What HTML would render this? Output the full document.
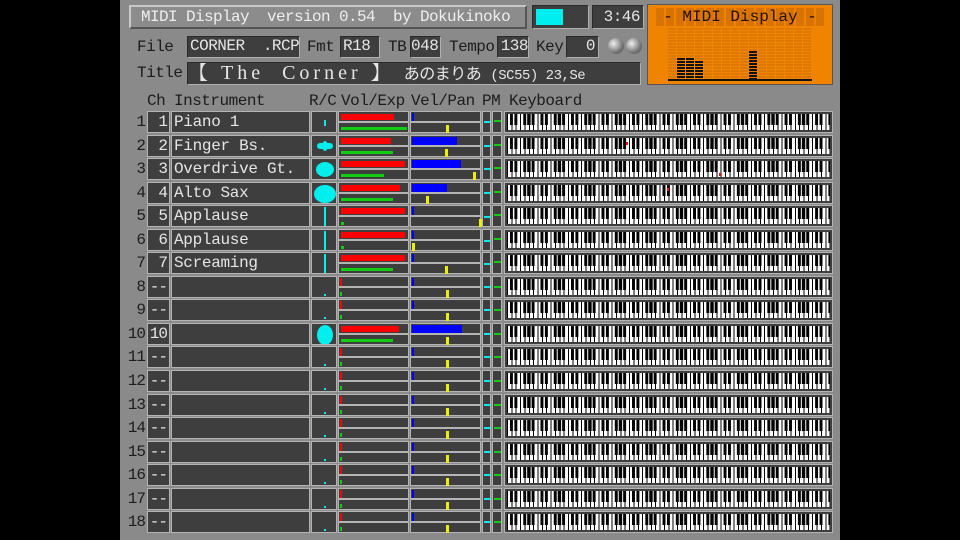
<!DOCTYPE html>
<html><head><meta charset="utf-8"><style>
*{margin:0;padding:0;box-sizing:border-box}
body{width:960px;height:540px;background:#000;position:relative;overflow:hidden;font-family:"Liberation Mono","Noto Sans CJK JP",monospace}
#p{position:absolute;left:120px;top:0;width:720px;height:540px;background:#8a8a8a}
.a{position:absolute}
.lbl{position:absolute;color:#1c1c1c;font-size:16px;line-height:20px;letter-spacing:-0.5px}
.box{position:absolute;background:#3e3e3e;border:1px solid #2a2a2a;border-right-color:#b0b0b0;border-bottom-color:#b0b0b0;color:#e6e6e6;font-size:16px;line-height:19px;overflow:hidden;white-space:nowrap;letter-spacing:-0.5px}
.row{position:absolute;left:0;width:720px;height:23px}
.row div{position:absolute}
.n{left:0;width:25px;text-align:right;color:#1c1c1c;font-size:16px;line-height:23px;letter-spacing:-1px}
.c{top:0;height:22px;background:#3e3e3e;border:1px solid #b4b4b4;color:#e6e6e6;font-size:16px;line-height:21px;white-space:nowrap;overflow:hidden}
.cb{left:27px;width:23px;text-align:right;padding-right:2px;letter-spacing:-1px}
.ib{left:51px;width:139px;padding-left:2px;letter-spacing:-0.3px}
.rc{left:191px;width:26px}
.h1{height:11px;background:#3e3e3e;border:1px solid #b4b4b4}
.v{left:218px;width:71px}
.w{left:290px;width:71px}
.t{top:0}.b{top:11px}
.pp{left:362px;width:9px}.mm{left:372px;width:10px}
.kb{left:384px;width:329px;padding:2px}
.kb i{display:block;width:100%;height:100%;background:
linear-gradient(90deg,transparent 0 2.9px,#000 2.9px 5.9px,transparent 5.9px 7.3px,#000 7.3px 10.3px,transparent 10.3px 16px,#000 16px 19px,transparent 19px 20.4px,#000 20.4px 23.4px,transparent 23.4px 24.7px,#000 24.7px 27.7px,transparent 27.7px) 0 0/30.52px 66% repeat-x,
repeating-linear-gradient(90deg,#000 0 1px,#fff 1px 4.36px)}
.r{background:#f00}.g{background:#1c1}.bl{background:#00f}.y{background:#ee0}.cy{background:#0ee}
</style></head><body><div id="p">
<div class="a" style="left:9px;top:5px;width:398px;height:24px;background:#8c8c8c;border:2px solid #c8c8c8;border-right-color:#555;border-bottom-color:#555;color:#eee;font-size:16px;line-height:20px;padding-left:10px;white-space:pre;letter-spacing:-0.6px">MIDI Display  version 0.54  by Dokukinoko</div>
<div class="box" style="left:412px;top:5px;width:57px;height:24px"><div class="a cy" style="left:3px;top:3px;width:27px;height:16px"></div></div>
<div class="box" style="left:472px;top:5px;width:52px;height:24px;text-align:right;padding-right:3px;line-height:22px">3:46</div>
<div class="a" style="left:527px;top:4px;width:186px;height:81px;background:#f08400;border:1px solid #555"></div>
<div class="a" style="left:536px;top:8px;width:168px;height:18px;background:repeating-linear-gradient(90deg,#d87200 0 8px,transparent 8px 10px)"></div>
<div class="a" style="left:535px;top:7px;width:170px;color:#201000;font-size:16px;line-height:20px;text-align:center;white-space:pre">- MIDI Display -</div>
<div class="a" style="left:548px;top:28px;width:144px;height:53px;background:repeating-linear-gradient(180deg,#dd7800 0 2px,transparent 2px 3px);-webkit-mask:repeating-linear-gradient(90deg,#000 0 8px,transparent 8px 9px);mask:repeating-linear-gradient(90deg,#000 0 8px,transparent 8px 9px)"></div>
<div class="a" style="left:548px;top:79px;width:144px;height:2px;background:#111"></div>
<div class="a" style="left:557px;top:58px;width:8px;height:23px;background:repeating-linear-gradient(180deg,#111 0 2px,transparent 2px 3px)"></div>
<div class="a" style="left:566px;top:58px;width:8px;height:23px;background:repeating-linear-gradient(180deg,#111 0 2px,transparent 2px 3px)"></div>
<div class="a" style="left:575px;top:61px;width:8px;height:20px;background:repeating-linear-gradient(180deg,#111 0 2px,transparent 2px 3px)"></div>
<div class="a" style="left:629px;top:51px;width:8px;height:30px;background:repeating-linear-gradient(180deg,#111 0 2px,transparent 2px 3px)"></div>
<div class="lbl" style="left:17px;top:37px">File</div>
<div class="box" style="left:67px;top:36px;width:113px;height:22px;white-space:pre;padding-left:2px">CORNER  .RCP</div>
<div class="lbl" style="left:187px;top:37px">Fmt</div>
<div class="box" style="left:220px;top:36px;width:40px;height:22px;padding-left:2px">R18</div>
<div class="lbl" style="left:268px;top:37px">TB</div>
<div class="box" style="left:290px;top:36px;width:31px;height:22px">048</div>
<div class="lbl" style="left:329px;top:37px">Tempo</div>
<div class="box" style="left:377px;top:36px;width:32px;height:22px;text-align:right">138</div>
<div class="lbl" style="left:416px;top:37px">Key</div>
<div class="box" style="left:446px;top:36px;width:33px;height:22px;text-align:right;padding-right:3px">0</div>
<div class="a" style="left:488px;top:38px;width:16px;height:16px;border-radius:50%;background:radial-gradient(circle at 35% 35%,#eee,#777 60%,#444)"></div>
<div class="a" style="left:506px;top:38px;width:16px;height:16px;border-radius:50%;background:radial-gradient(circle at 35% 35%,#eee,#777 60%,#444)"></div>
<div class="lbl" style="left:17px;top:63px">Title</div>
<div class="box" style="left:67px;top:62px;width:454px;height:23px;white-space:pre;line-height:21px"><span style="font-family:'Liberation Serif','Noto Serif CJK SC',serif;font-size:20px;letter-spacing:4px">【 The  Corner 】</span><span style="font-size:16px"> あのまりあ <span style="font-size:14px">(SC55) 23,Se</span></span></div>
<div class="lbl" style="left:27px;top:91px">Ch</div>
<div class="lbl" style="left:54px;top:91px">Instrument</div>
<div class="lbl" style="left:189px;top:91px">R/C</div>
<div class="lbl" style="left:221px;top:91px">Vol/Exp</div>
<div class="lbl" style="left:291px;top:91px">Vel/Pan</div>
<div class="lbl" style="left:362px;top:91px">PM</div>
<div class="lbl" style="left:389px;top:91px">Keyboard</div>

<div class="row" style="top:111px"><div class="n">1</div><div class="c cb">1</div><div class="c ib">Piano 1</div><div class="c rc"><div class="cy" style="left:12px;top:8px;width:2px;height:6px"></div></div><div class="h1 v t"><div class="r" style="left:2px;top:2px;width:53px;height:6px"></div></div><div class="h1 v b"><div class="g" style="left:2px;top:4px;width:66px;height:3px"></div></div><div class="h1 w t"><div class="bl" style="left:1px;top:1px;width:2px;height:8px"></div></div><div class="h1 w b"><div class="y" style="left:35px;top:2px;width:3px;height:8px"></div></div><div class="c pp"><div class="cy" style="left:1px;top:9px;width:6px;height:2px"></div></div><div class="c mm"><div class="g" style="left:1px;top:8px;width:7px;height:2px"></div></div><div class="c kb"><i></i></div></div>

<div class="row" style="top:135px"><div class="n">2</div><div class="c cb">2</div><div class="c ib">Finger Bs.</div><div class="c rc"><div class="cy" style="left:5px;top:7px;width:16px;height:6px;border-radius:3px"></div><div class="cy" style="left:10px;top:5px;width:6px;height:10px;border-radius:50%"></div></div><div class="h1 v t"><div class="r" style="left:2px;top:2px;width:50px;height:6px"></div></div><div class="h1 v b"><div class="g" style="left:2px;top:4px;width:52px;height:3px"></div></div><div class="h1 w t"><div class="bl" style="left:1px;top:1px;width:45px;height:8px"></div></div><div class="h1 w b"><div class="y" style="left:34px;top:2px;width:3px;height:8px"></div></div><div class="c pp"><div class="cy" style="left:1px;top:9px;width:6px;height:2px"></div></div><div class="c mm"><div class="g" style="left:1px;top:8px;width:7px;height:2px"></div></div><div class="c kb"><i></i><div class="r" style="left:121px;top:6px;width:2px;height:3px"></div></div></div>

<div class="row" style="top:158px"><div class="n">3</div><div class="c cb">3</div><div class="c ib">Overdrive Gt.</div><div class="c rc"><div class="cy" style="left:4px;top:3px;width:18px;height:15px;border-radius:50%"></div></div><div class="h1 v t"><div class="r" style="left:2px;top:2px;width:64px;height:6px"></div></div><div class="h1 v b"><div class="g" style="left:2px;top:4px;width:43px;height:3px"></div></div><div class="h1 w t"><div class="bl" style="left:1px;top:1px;width:49px;height:8px"></div></div><div class="h1 w b"><div class="y" style="left:62px;top:2px;width:3px;height:8px"></div></div><div class="c pp"><div class="cy" style="left:1px;top:9px;width:6px;height:2px"></div></div><div class="c mm"><div class="g" style="left:1px;top:8px;width:7px;height:2px"></div></div><div class="c kb"><i></i><div class="r" style="left:214px;top:14px;width:2px;height:3px"></div></div></div>

<div class="row" style="top:182px"><div class="n">4</div><div class="c cb">4</div><div class="c ib">Alto Sax</div><div class="c rc"><div class="cy" style="left:2px;top:2px;width:22px;height:18px;border-radius:50%"></div></div><div class="h1 v t"><div class="r" style="left:2px;top:2px;width:59px;height:6px"></div></div><div class="h1 v b"><div class="g" style="left:2px;top:4px;width:52px;height:3px"></div></div><div class="h1 w t"><div class="bl" style="left:1px;top:1px;width:35px;height:8px"></div></div><div class="h1 w b"><div class="y" style="left:15px;top:2px;width:3px;height:8px"></div></div><div class="c pp"><div class="cy" style="left:1px;top:9px;width:6px;height:2px"></div></div><div class="c mm"><div class="g" style="left:1px;top:8px;width:7px;height:2px"></div></div><div class="c kb"><i></i><div class="r" style="left:162px;top:5px;width:2px;height:3px"></div></div></div>

<div class="row" style="top:205px"><div class="n">5</div><div class="c cb">5</div><div class="c ib">Applause</div><div class="c rc"><div class="cy" style="left:12px;top:1px;width:2px;height:19px"></div></div><div class="h1 v t"><div class="r" style="left:2px;top:2px;width:64px;height:6px"></div></div><div class="h1 v b"><div class="g" style="left:2px;top:5px;width:3px;height:3px"></div></div><div class="h1 w t"><div class="bl" style="left:1px;top:1px;width:2px;height:8px"></div></div><div class="h1 w b"><div class="y" style="left:68px;top:2px;width:3px;height:8px"></div></div><div class="c pp"><div class="cy" style="left:1px;top:10px;width:6px;height:2px"></div></div><div class="c mm"><div class="g" style="left:1px;top:8px;width:7px;height:2px"></div></div><div class="c kb"><i></i></div></div>

<div class="row" style="top:229px"><div class="n">6</div><div class="c cb">6</div><div class="c ib">Applause</div><div class="c rc"><div class="cy" style="left:12px;top:1px;width:2px;height:19px"></div></div><div class="h1 v t"><div class="r" style="left:2px;top:2px;width:64px;height:6px"></div></div><div class="h1 v b"><div class="g" style="left:2px;top:5px;width:3px;height:3px"></div></div><div class="h1 w t"><div class="bl" style="left:1px;top:1px;width:2px;height:8px"></div></div><div class="h1 w b"><div class="y" style="left:1px;top:2px;width:3px;height:8px"></div></div><div class="c pp"><div class="cy" style="left:1px;top:10px;width:6px;height:2px"></div></div><div class="c mm"><div class="g" style="left:1px;top:8px;width:7px;height:2px"></div></div><div class="c kb"><i></i></div></div>

<div class="row" style="top:252px"><div class="n">7</div><div class="c cb">7</div><div class="c ib">Screaming</div><div class="c rc"><div class="cy" style="left:12px;top:1px;width:2px;height:19px"></div></div><div class="h1 v t"><div class="r" style="left:2px;top:2px;width:64px;height:6px"></div></div><div class="h1 v b"><div class="g" style="left:2px;top:4px;width:52px;height:3px"></div></div><div class="h1 w t"><div class="bl" style="left:1px;top:1px;width:2px;height:8px"></div></div><div class="h1 w b"><div class="y" style="left:34px;top:2px;width:3px;height:8px"></div></div><div class="c pp"><div class="cy" style="left:1px;top:10px;width:6px;height:2px"></div></div><div class="c mm"><div class="g" style="left:1px;top:8px;width:7px;height:2px"></div></div><div class="c kb"><i></i></div></div>

<div class="row" style="top:276px"><div class="n">8</div><div class="c cb">--</div><div class="c ib"></div><div class="c rc"><div class="cy" style="left:12px;top:17px;width:2px;height:2px"></div></div><div class="h1 v t"><div class="r" style="left:1px;top:1px;width:2px;height:8px"></div></div><div class="h1 v b"><div class="g" style="left:1px;top:4px;width:2px;height:4px"></div></div><div class="h1 w t"><div class="bl" style="left:1px;top:1px;width:2px;height:8px"></div></div><div class="h1 w b"><div class="y" style="left:35px;top:2px;width:3px;height:8px"></div></div><div class="c pp"><div class="cy" style="left:1px;top:9px;width:6px;height:2px"></div></div><div class="c mm"><div class="g" style="left:1px;top:9px;width:7px;height:2px"></div></div><div class="c kb"><i></i></div></div>

<div class="row" style="top:299px"><div class="n">9</div><div class="c cb">--</div><div class="c ib"></div><div class="c rc"><div class="cy" style="left:12px;top:17px;width:2px;height:2px"></div></div><div class="h1 v t"><div class="r" style="left:1px;top:1px;width:2px;height:8px"></div></div><div class="h1 v b"><div class="g" style="left:1px;top:4px;width:2px;height:4px"></div></div><div class="h1 w t"><div class="bl" style="left:1px;top:1px;width:2px;height:8px"></div></div><div class="h1 w b"><div class="y" style="left:35px;top:2px;width:3px;height:8px"></div></div><div class="c pp"><div class="cy" style="left:1px;top:9px;width:6px;height:2px"></div></div><div class="c mm"><div class="g" style="left:1px;top:9px;width:7px;height:2px"></div></div><div class="c kb"><i></i></div></div>

<div class="row" style="top:323px"><div class="n">10</div><div class="c cb">10</div><div class="c ib"></div><div class="c rc"><div class="cy" style="left:5px;top:1px;width:16px;height:20px;border-radius:50%"></div></div><div class="h1 v t"><div class="r" style="left:2px;top:2px;width:58px;height:6px"></div></div><div class="h1 v b"><div class="g" style="left:2px;top:4px;width:52px;height:3px"></div></div><div class="h1 w t"><div class="bl" style="left:1px;top:1px;width:50px;height:8px"></div></div><div class="h1 w b"><div class="y" style="left:35px;top:2px;width:3px;height:8px"></div></div><div class="c pp"><div class="cy" style="left:1px;top:9px;width:6px;height:2px"></div></div><div class="c mm"><div class="g" style="left:1px;top:9px;width:7px;height:2px"></div></div><div class="c kb"><i></i></div></div>

<div class="row" style="top:346px"><div class="n">11</div><div class="c cb">--</div><div class="c ib"></div><div class="c rc"><div class="cy" style="left:12px;top:17px;width:2px;height:2px"></div></div><div class="h1 v t"><div class="r" style="left:1px;top:1px;width:2px;height:8px"></div></div><div class="h1 v b"><div class="g" style="left:1px;top:4px;width:2px;height:4px"></div></div><div class="h1 w t"><div class="bl" style="left:1px;top:1px;width:2px;height:8px"></div></div><div class="h1 w b"><div class="y" style="left:35px;top:2px;width:3px;height:8px"></div></div><div class="c pp"><div class="cy" style="left:1px;top:9px;width:6px;height:2px"></div></div><div class="c mm"><div class="g" style="left:1px;top:9px;width:7px;height:2px"></div></div><div class="c kb"><i></i></div></div>

<div class="row" style="top:370px"><div class="n">12</div><div class="c cb">--</div><div class="c ib"></div><div class="c rc"><div class="cy" style="left:12px;top:17px;width:2px;height:2px"></div></div><div class="h1 v t"><div class="r" style="left:1px;top:1px;width:2px;height:8px"></div></div><div class="h1 v b"><div class="g" style="left:1px;top:4px;width:2px;height:4px"></div></div><div class="h1 w t"><div class="bl" style="left:1px;top:1px;width:2px;height:8px"></div></div><div class="h1 w b"><div class="y" style="left:35px;top:2px;width:3px;height:8px"></div></div><div class="c pp"><div class="cy" style="left:1px;top:9px;width:6px;height:2px"></div></div><div class="c mm"><div class="g" style="left:1px;top:9px;width:7px;height:2px"></div></div><div class="c kb"><i></i></div></div>

<div class="row" style="top:394px"><div class="n">13</div><div class="c cb">--</div><div class="c ib"></div><div class="c rc"><div class="cy" style="left:12px;top:17px;width:2px;height:2px"></div></div><div class="h1 v t"><div class="r" style="left:1px;top:1px;width:2px;height:8px"></div></div><div class="h1 v b"><div class="g" style="left:1px;top:4px;width:2px;height:4px"></div></div><div class="h1 w t"><div class="bl" style="left:1px;top:1px;width:2px;height:8px"></div></div><div class="h1 w b"><div class="y" style="left:35px;top:2px;width:3px;height:8px"></div></div><div class="c pp"><div class="cy" style="left:1px;top:9px;width:6px;height:2px"></div></div><div class="c mm"><div class="g" style="left:1px;top:9px;width:7px;height:2px"></div></div><div class="c kb"><i></i></div></div>

<div class="row" style="top:417px"><div class="n">14</div><div class="c cb">--</div><div class="c ib"></div><div class="c rc"><div class="cy" style="left:12px;top:17px;width:2px;height:2px"></div></div><div class="h1 v t"><div class="r" style="left:1px;top:1px;width:2px;height:8px"></div></div><div class="h1 v b"><div class="g" style="left:1px;top:4px;width:2px;height:4px"></div></div><div class="h1 w t"><div class="bl" style="left:1px;top:1px;width:2px;height:8px"></div></div><div class="h1 w b"><div class="y" style="left:35px;top:2px;width:3px;height:8px"></div></div><div class="c pp"><div class="cy" style="left:1px;top:9px;width:6px;height:2px"></div></div><div class="c mm"><div class="g" style="left:1px;top:9px;width:7px;height:2px"></div></div><div class="c kb"><i></i></div></div>

<div class="row" style="top:441px"><div class="n">15</div><div class="c cb">--</div><div class="c ib"></div><div class="c rc"><div class="cy" style="left:12px;top:17px;width:2px;height:2px"></div></div><div class="h1 v t"><div class="r" style="left:1px;top:1px;width:2px;height:8px"></div></div><div class="h1 v b"><div class="g" style="left:1px;top:4px;width:2px;height:4px"></div></div><div class="h1 w t"><div class="bl" style="left:1px;top:1px;width:2px;height:8px"></div></div><div class="h1 w b"><div class="y" style="left:35px;top:2px;width:3px;height:8px"></div></div><div class="c pp"><div class="cy" style="left:1px;top:9px;width:6px;height:2px"></div></div><div class="c mm"><div class="g" style="left:1px;top:9px;width:7px;height:2px"></div></div><div class="c kb"><i></i></div></div>

<div class="row" style="top:464px"><div class="n">16</div><div class="c cb">--</div><div class="c ib"></div><div class="c rc"><div class="cy" style="left:12px;top:17px;width:2px;height:2px"></div></div><div class="h1 v t"><div class="r" style="left:1px;top:1px;width:2px;height:8px"></div></div><div class="h1 v b"><div class="g" style="left:1px;top:4px;width:2px;height:4px"></div></div><div class="h1 w t"><div class="bl" style="left:1px;top:1px;width:2px;height:8px"></div></div><div class="h1 w b"><div class="y" style="left:35px;top:2px;width:3px;height:8px"></div></div><div class="c pp"><div class="cy" style="left:1px;top:9px;width:6px;height:2px"></div></div><div class="c mm"><div class="g" style="left:1px;top:9px;width:7px;height:2px"></div></div><div class="c kb"><i></i></div></div>

<div class="row" style="top:488px"><div class="n">17</div><div class="c cb">--</div><div class="c ib"></div><div class="c rc"><div class="cy" style="left:12px;top:17px;width:2px;height:2px"></div></div><div class="h1 v t"><div class="r" style="left:1px;top:1px;width:2px;height:8px"></div></div><div class="h1 v b"><div class="g" style="left:1px;top:4px;width:2px;height:4px"></div></div><div class="h1 w t"><div class="bl" style="left:1px;top:1px;width:2px;height:8px"></div></div><div class="h1 w b"><div class="y" style="left:35px;top:2px;width:3px;height:8px"></div></div><div class="c pp"><div class="cy" style="left:1px;top:9px;width:6px;height:2px"></div></div><div class="c mm"><div class="g" style="left:1px;top:9px;width:7px;height:2px"></div></div><div class="c kb"><i></i></div></div>

<div class="row" style="top:511px"><div class="n">18</div><div class="c cb">--</div><div class="c ib"></div><div class="c rc"><div class="cy" style="left:12px;top:17px;width:2px;height:2px"></div></div><div class="h1 v t"><div class="r" style="left:1px;top:1px;width:2px;height:8px"></div></div><div class="h1 v b"><div class="g" style="left:1px;top:4px;width:2px;height:4px"></div></div><div class="h1 w t"><div class="bl" style="left:1px;top:1px;width:2px;height:8px"></div></div><div class="h1 w b"><div class="y" style="left:35px;top:2px;width:3px;height:8px"></div></div><div class="c pp"><div class="cy" style="left:1px;top:9px;width:6px;height:2px"></div></div><div class="c mm"><div class="g" style="left:1px;top:9px;width:7px;height:2px"></div></div><div class="c kb"><i></i></div></div>
</div></body></html>
